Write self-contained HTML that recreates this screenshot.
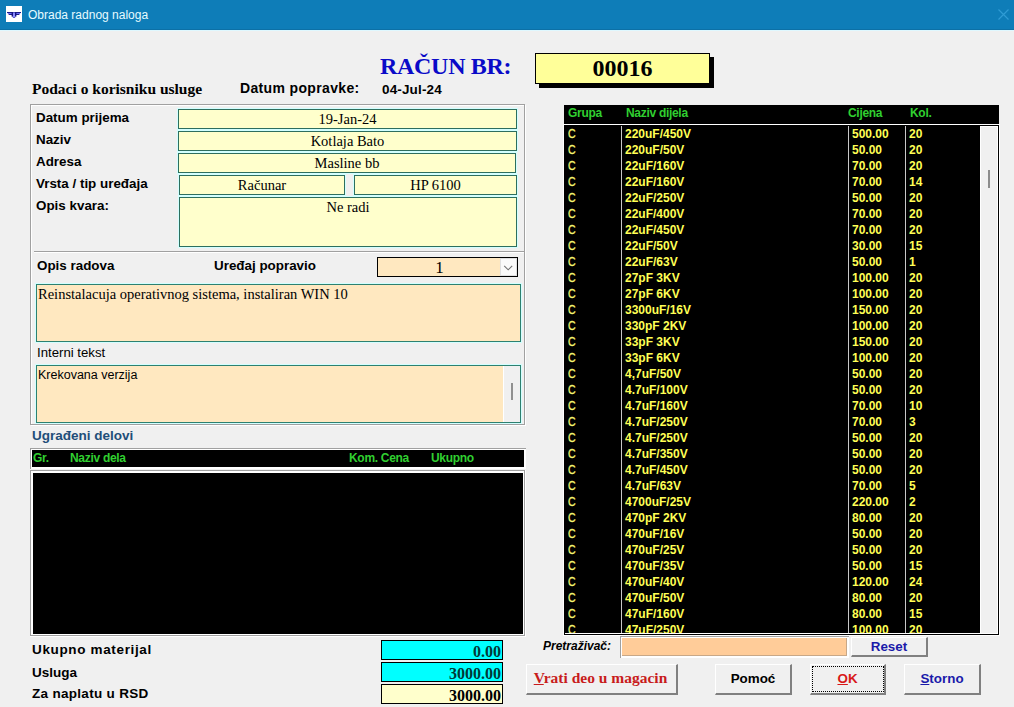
<!DOCTYPE html>
<html>
<head>
<meta charset="utf-8">
<title>Obrada radnog naloga</title>
<style>
*{box-sizing:border-box;margin:0;padding:0}
html,body{width:1014px;height:707px;overflow:hidden;background:#f0f0f0}
body{position:relative;font-family:"Liberation Sans",sans-serif;color:#000}
.abs{position:absolute;white-space:nowrap}
.sans{font-family:"Liberation Sans",sans-serif}
.serif{font-family:"Liberation Serif",serif}
.b{font-weight:bold}
#titlebar{left:0;top:0;width:1014px;height:30px;background:#0e7db8;border-bottom:1px solid #0c70a6}
#titleline{left:0;top:30px;width:1014px;height:1px;background:#dff8ff}
#title{left:28px;top:8px;font-size:12px;line-height:14px;color:#e6fbff}
#icon{left:6px;top:6px;width:16px;height:16px;background:#fff}
.lbl{font-size:13.4px;line-height:15px;font-weight:bold}
.fld{background:#ffffcc;border:1px solid #2e6e5e;box-shadow:0 0 0 1px #d2ffff;font-family:"Liberation Serif",serif;font-size:14.5px;line-height:19px;text-align:center;height:20px}
.frame{border:1px solid #a0a0a0;box-shadow:inset 1px 1px 0 #fff, 1px 1px 0 #fff}
.hdr{background:#000;color:#30d030;font-weight:bold;font-size:12px;line-height:14px;letter-spacing:-0.3px}
.btn{background:#f0f0f0;border-top:1px solid #fff;border-left:1px solid #fff;border-right:2px solid #808080;border-bottom:2px solid #808080;text-align:center;font-weight:bold}
.row{position:absolute;left:0;margin-top:1px;height:16px;width:100%;font-size:12px;line-height:16px;font-weight:bold;color:#ffff55}
.row span{position:absolute;top:0}
.c1{left:4px;font-weight:normal;color:#f4f470;-webkit-text-stroke:0.3px #f4f470;transform:scaleX(.88);transform-origin:0 0}.c2{left:61px}.c3{left:288px}.c4{left:345px}
.vl{position:absolute;top:1px;width:1px;height:100%;background:#c8c8c8}
</style>
</head>
<body>
<!-- title bar -->
<div id="titlebar" class="abs"></div>
<div id="titleline" class="abs"></div>
<div id="icon" class="abs">
<svg width="16" height="16" viewBox="0 0 16 16"><rect x="1" y="6" width="14" height="1" fill="#1c1c8c"/><rect x="1.8" y="7" width="12.4" height="1" fill="#6c6cf4"/><rect x="2.6" y="8" width="10.8" height="1" fill="#1c1c8c"/><rect x="5.6" y="6.6" width="1.5" height="4" fill="#14147c"/><rect x="8.9" y="6.6" width="1.5" height="4" fill="#14147c"/><path d="M6.2 10.4h3.6L8.8 12H7.2z" fill="#3a3ab0"/><ellipse cx="8" cy="9" rx="1.05" ry="2.9" fill="#8c8cff"/></svg>
</div>
<div id="title" class="abs">Obrada radnog naloga</div>
<svg class="abs" style="left:998px;top:9px" width="11" height="11" viewBox="0 0 11 11"><path d="M0.5 0.5L10.5 10.5M10.5 0.5L0.5 10.5" stroke="#2f9bd4" stroke-width="1.2" fill="none"/></svg>

<!-- heading -->
<div class="abs serif b" style="left:380px;top:52px;font-size:24px;line-height:28px;letter-spacing:-0.3px;color:#0a0ac8">RAČUN BR:</div>
<div class="abs" style="left:539px;top:57px;width:175px;height:31px;background:#000"></div>
<div class="abs serif b" style="left:535px;top:53px;width:175px;height:31px;background:#ffff99;border:1px solid #000;text-align:center;font-size:24px;line-height:29px">00016</div>

<div class="abs serif b" style="left:32px;top:80px;font-size:15.5px;line-height:18px">Podaci o korisniku usluge</div>
<div class="abs sans b" id="dp" style="left:240px;top:81px;font-size:14px;line-height:15px;letter-spacing:0.35px">Datum popravke:</div>
<div class="abs sans b" id="dpv" style="left:382px;top:82px;font-size:13.5px;line-height:15px;letter-spacing:0.15px">04-Jul-24</div>

<!-- group frame -->
<div class="abs frame" style="left:30px;top:104px;width:495px;height:321px"></div>
<div class="abs" style="left:34px;top:251px;width:490px;height:1px;background:#a0a0a0"></div>
<div class="abs" style="left:34px;top:252px;width:490px;height:1px;background:#fff"></div>

<div class="abs lbl" style="left:36px;top:110px">Datum prijema</div>
<div class="abs lbl" style="left:36px;top:132px">Naziv</div>
<div class="abs lbl" style="left:36px;top:154px">Adresa</div>
<div class="abs lbl" style="left:36px;top:176px">Vrsta / tip uređaja</div>
<div class="abs lbl" style="left:36px;top:198px">Opis kvara:</div>

<div class="abs fld" style="left:178px;top:109px;width:339px">19-Jan-24</div>
<div class="abs fld" style="left:178px;top:131px;width:339px">Kotlaja Bato</div>
<div class="abs fld" style="left:178px;top:153px;width:338px">Masline bb</div>
<div class="abs fld" style="left:179px;top:175px;width:166px">Računar</div>
<div class="abs fld" style="left:354px;top:175px;width:163px">HP 6100</div>
<div class="abs fld" style="left:179px;top:197px;width:338px;height:50px">Ne radi</div>

<div class="abs lbl" style="left:37px;top:258px">Opis radova</div>
<div class="abs lbl" style="left:214px;top:258px">Uređaj popravio</div>
<div class="abs serif" style="left:377px;top:257px;width:141px;height:20px;background:#ffe8c0;border:1px solid #000;font-size:17px;line-height:20px;text-align:center;padding-right:16px">1</div>
<div class="abs" style="left:500px;top:258px;width:17px;height:18px;background:#fafafa;border:1px solid #e0e0e0"></div>
<svg class="abs" style="left:503px;top:264px" width="11" height="8" viewBox="0 0 11 8"><path d="M1.2 1.8L5.2 5.8L9.2 1.8" stroke="#707070" stroke-width="1.1" fill="none"/></svg>

<div class="abs serif" style="left:36px;top:284px;width:485px;height:58px;background:#ffe8c0;border:1px solid #2e8070;box-shadow:0 0 0 1px #d2ffff;font-size:14.5px;line-height:17px;padding:1px 1px">Reinstalacuja operativnog sistema, instaliran WIN 10</div>

<div class="abs sans" style="left:37px;top:345px;font-size:13.2px;line-height:15px">Interni tekst</div>
<div class="abs sans" style="left:36px;top:365px;width:485px;height:58px;background:#ffe8c0;border:1px solid #2e8070;box-shadow:0 0 0 1px #d2ffff;font-size:12.5px;line-height:14px;padding:2px 1px">Krekovana verzija</div>
<div class="abs" style="left:503px;top:366px;width:17px;height:56px;background:#f0f0f0;border-left:1px solid #fff"></div>
<div class="abs" style="left:511px;top:383px;width:2px;height:17px;background:#909090"></div>

<div class="abs sans b" style="left:32px;top:428px;font-size:13.5px;line-height:15px;color:#1f4e79">Ugrađeni delovi</div>

<!-- bottom-left grid -->
<div class="abs" style="left:30px;top:448px;width:496px;height:21px;background:#fff;border-top:1px solid #a0a0a0;border-left:1px solid #a0a0a0"></div>
<div class="abs hdr" style="left:32px;top:450px;width:492px;height:17px"></div>
<div class="abs hdr" style="left:33px;top:451px">Gr.</div>
<div class="abs hdr" style="left:70px;top:451px">Naziv dela</div>
<div class="abs hdr" style="left:349px;top:451px">Kom. Cena</div>
<div class="abs hdr" style="left:431px;top:451px">Ukupno</div>
<div class="abs" style="left:30px;top:470px;width:496px;height:167px;background:#fff"></div>
<div class="abs" style="left:30px;top:470px;width:495px;height:166px;border:1px solid #a0a0a0;background:#fff"></div>
<div class="abs" style="left:33px;top:473px;width:490px;height:161px;background:#000"></div>

<!-- totals -->
<div class="abs sans b tl" style="left:32px;top:642px;font-size:13.5px;line-height:16px;letter-spacing:0.65px">Ukupno materijal</div>
<div class="abs sans b tl" style="left:32px;top:665px;font-size:13.5px;line-height:16px">Usluga</div>
<div class="abs sans b tl" style="left:32px;top:686px;font-size:13.5px;line-height:16px;letter-spacing:0.3px">Za naplatu u RSD</div>
<div class="abs serif b" style="left:381px;top:640px;width:122px;height:20px;background:#00ffff;border:1px solid #000;text-align:right;font-size:16px;line-height:21px;padding-right:1px;color:#003838">0.00</div>
<div class="abs serif b" style="left:381px;top:662px;width:122px;height:20px;background:#00ffff;border:1px solid #000;text-align:right;font-size:16px;line-height:21px;padding-right:1px;color:#003838">3000.00</div>
<div class="abs serif b" style="left:381px;top:684px;width:122px;height:20px;background:#ffffcc;border:1px solid #000;text-align:right;font-size:16px;line-height:21px;padding-right:1px">3000.00</div>

<!-- right list -->
<div class="abs hdr" style="left:564px;top:105px;width:435px;height:19px"></div>
<div class="abs hdr" style="left:568px;top:106px">Grupa</div>
<div class="abs hdr" style="left:626px;top:106px">Naziv dijela</div>
<div class="abs hdr" style="left:848px;top:106px">Cijena</div>
<div class="abs hdr" style="left:910px;top:106px">Kol.</div>
<div class="abs" style="left:563px;top:124px;width:437px;height:512px;background:#fff"></div>
<div class="abs" style="left:564px;top:125px;width:435px;height:510px;background:#000"></div>
<div class="abs" style="left:565px;top:126px;width:433px;height:508px;background:#fff"></div>
<div class="abs" style="left:981px;top:127px;width:16px;height:506px;background:#f0f0f0"></div>
<div class="abs" style="left:988px;top:170px;width:2px;height:18px;background:#8c8c8c"></div>
<div id="list" class="abs" style="left:564px;top:125px;width:416px;height:508px;background:#000;overflow:hidden">
<div class="row" style="top:0px"><span class="c1">C</span><span class="c2">220uF/450V</span><span class="c3">500.00</span><span class="c4">20</span></div>
<div class="row" style="top:16px"><span class="c1">C</span><span class="c2">220uF/50V</span><span class="c3">50.00</span><span class="c4">20</span></div>
<div class="row" style="top:32px"><span class="c1">C</span><span class="c2">22uF/160V</span><span class="c3">70.00</span><span class="c4">20</span></div>
<div class="row" style="top:48px"><span class="c1">C</span><span class="c2">22uF/160V</span><span class="c3">70.00</span><span class="c4">14</span></div>
<div class="row" style="top:64px"><span class="c1">C</span><span class="c2">22uF/250V</span><span class="c3">50.00</span><span class="c4">20</span></div>
<div class="row" style="top:80px"><span class="c1">C</span><span class="c2">22uF/400V</span><span class="c3">70.00</span><span class="c4">20</span></div>
<div class="row" style="top:96px"><span class="c1">C</span><span class="c2">22uF/450V</span><span class="c3">70.00</span><span class="c4">20</span></div>
<div class="row" style="top:112px"><span class="c1">C</span><span class="c2">22uF/50V</span><span class="c3">30.00</span><span class="c4">15</span></div>
<div class="row" style="top:128px"><span class="c1">C</span><span class="c2">22uF/63V</span><span class="c3">50.00</span><span class="c4">1</span></div>
<div class="row" style="top:144px"><span class="c1">C</span><span class="c2">27pF 3KV</span><span class="c3">100.00</span><span class="c4">20</span></div>
<div class="row" style="top:160px"><span class="c1">C</span><span class="c2">27pF 6KV</span><span class="c3">100.00</span><span class="c4">20</span></div>
<div class="row" style="top:176px"><span class="c1">C</span><span class="c2">3300uF/16V</span><span class="c3">150.00</span><span class="c4">20</span></div>
<div class="row" style="top:192px"><span class="c1">C</span><span class="c2">330pF 2KV</span><span class="c3">100.00</span><span class="c4">20</span></div>
<div class="row" style="top:208px"><span class="c1">C</span><span class="c2">33pF 3KV</span><span class="c3">150.00</span><span class="c4">20</span></div>
<div class="row" style="top:224px"><span class="c1">C</span><span class="c2">33pF 6KV</span><span class="c3">100.00</span><span class="c4">20</span></div>
<div class="row" style="top:240px"><span class="c1">C</span><span class="c2">4,7uF/50V</span><span class="c3">50.00</span><span class="c4">20</span></div>
<div class="row" style="top:256px"><span class="c1">C</span><span class="c2">4.7uF/100V</span><span class="c3">50.00</span><span class="c4">20</span></div>
<div class="row" style="top:272px"><span class="c1">C</span><span class="c2">4.7uF/160V</span><span class="c3">70.00</span><span class="c4">10</span></div>
<div class="row" style="top:288px"><span class="c1">C</span><span class="c2">4.7uF/250V</span><span class="c3">70.00</span><span class="c4">3</span></div>
<div class="row" style="top:304px"><span class="c1">C</span><span class="c2">4.7uF/250V</span><span class="c3">50.00</span><span class="c4">20</span></div>
<div class="row" style="top:320px"><span class="c1">C</span><span class="c2">4.7uF/350V</span><span class="c3">50.00</span><span class="c4">20</span></div>
<div class="row" style="top:336px"><span class="c1">C</span><span class="c2">4.7uF/450V</span><span class="c3">50.00</span><span class="c4">20</span></div>
<div class="row" style="top:352px"><span class="c1">C</span><span class="c2">4.7uF/63V</span><span class="c3">70.00</span><span class="c4">5</span></div>
<div class="row" style="top:368px"><span class="c1">C</span><span class="c2">4700uF/25V</span><span class="c3">220.00</span><span class="c4">2</span></div>
<div class="row" style="top:384px"><span class="c1">C</span><span class="c2">470pF 2KV</span><span class="c3">80.00</span><span class="c4">20</span></div>
<div class="row" style="top:400px"><span class="c1">C</span><span class="c2">470uF/16V</span><span class="c3">50.00</span><span class="c4">20</span></div>
<div class="row" style="top:416px"><span class="c1">C</span><span class="c2">470uF/25V</span><span class="c3">50.00</span><span class="c4">20</span></div>
<div class="row" style="top:432px"><span class="c1">C</span><span class="c2">470uF/35V</span><span class="c3">50.00</span><span class="c4">15</span></div>
<div class="row" style="top:448px"><span class="c1">C</span><span class="c2">470uF/40V</span><span class="c3">120.00</span><span class="c4">24</span></div>
<div class="row" style="top:464px"><span class="c1">C</span><span class="c2">470uF/50V</span><span class="c3">80.00</span><span class="c4">20</span></div>
<div class="row" style="top:480px"><span class="c1">C</span><span class="c2">47uF/160V</span><span class="c3">80.00</span><span class="c4">15</span></div>
<div class="row" style="top:496px"><span class="c1">C</span><span class="c2">47uF/250V</span><span class="c3">100.00</span><span class="c4">20</span></div>
<div class="vl" style="left:57px"></div><div class="vl" style="left:284px"></div><div class="vl" style="left:341px"></div>
</div>

<!-- search + buttons -->
<div class="abs sans b" style="left:543px;top:639px;font-size:12px;line-height:14px;font-style:italic">Pretraživač:</div>
<div class="abs" style="left:620px;top:636px;width:229px;height:22px;background:#fff;border-left:1px solid #a0a0a0;border-top:1px solid #a0a0a0"></div>
<div class="abs" style="left:622px;top:638px;width:225px;height:18px;background:#ffcc99;border-right:1px solid #c8a888;border-bottom:1px solid #c8a888"></div>
<div class="abs btn sans" style="left:851px;top:637px;width:77px;height:20px;font-size:13.4px;line-height:17px;color:#1a1aaa">Reset</div>

<div class="abs btn serif" style="left:526px;top:664px;width:152px;height:31px;font-size:15.5px;line-height:25px;padding-right:2px;color:#c81c1c"><u>V</u>rati deo u magacin</div>
<div class="abs btn sans" style="left:715px;top:664px;width:77px;height:31px;font-size:13.4px;line-height:27px">Pomoć</div>
<div class="abs btn sans" style="left:810px;top:664px;width:76px;height:31px;font-size:13.4px;line-height:27px;color:#d81818"><u>O</u>K</div>
<div class="abs" style="left:812px;top:666px;width:72px;height:26px;border:1px dotted #000"></div>
<div class="abs btn sans" style="left:904px;top:664px;width:77px;height:31px;font-size:13.4px;line-height:27px;color:#1a1aaa"><u>S</u>torno</div>

</body>
</html>
